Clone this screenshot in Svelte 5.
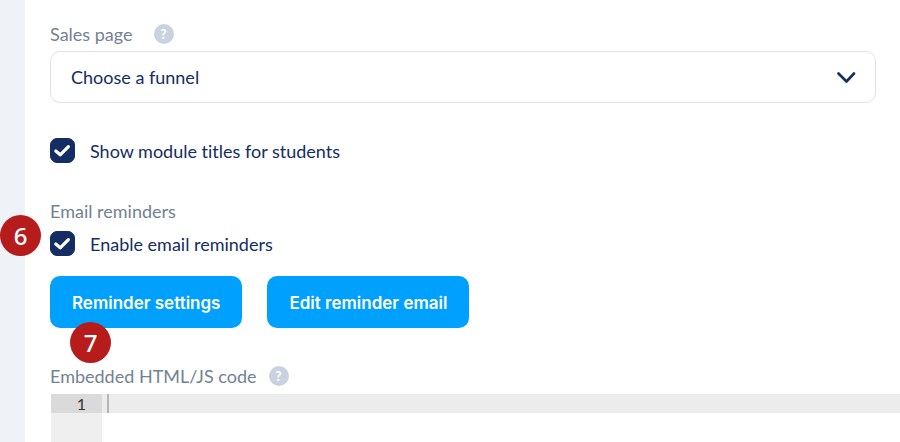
<script lang="ts">
	let funnel = '';
	let showTitles = true;
	let reminders = true;
	let code = '';

	$: lines = code.split('\n');
</script>

{#snippet help(topic: string)}
	<button type="button" class="help" aria-label={`Help: ${topic}`}>?</button>
{/snippet}

{#snippet tick()}
	<svg class="tick" viewBox="0 0 25 25" aria-hidden="true">
		<path d="M5.8 13 10.2 16.8 18.4 8.6" />
	</svg>
{/snippet}

<div class="page">
	<div class="rail"></div>
	<main>
		<section class="field">
			<div class="heading wide">
				<label for="funnel">Sales page</label>
				{@render help('Sales page')}
			</div>
			<div class="select">
				<select id="funnel" bind:value={funnel}>
					<option value="">Choose a funnel</option>
				</select>
				<svg class="chevron" viewBox="0 0 20 12" aria-hidden="true">
					<path d="M2.5 2.5 10.5 10.5 18 2.5" />
				</svg>
			</div>
		</section>

		<label class="check">
			<span class="box">
				<input type="checkbox" bind:checked={showTitles} />
				{@render tick()}
			</span>
			Show module titles for students
		</label>

		<section class="reminders">
			<div class="heading">Email reminders</div>
			<label class="check">
				<span class="box">
					<input type="checkbox" bind:checked={reminders} />
					{@render tick()}
				</span>
				Enable email reminders
				<span class="badge beside">6</span>
			</label>
			<div class="actions">
				<div class="action">
					<button type="button" class="primary">Reminder settings</button>
					<span class="badge below">7</span>
				</div>
				<button type="button" class="primary">Edit reminder email</button>
			</div>
		</section>

		<section class="embed">
			<div class="heading">
				<label for="code">Embedded HTML/JS code</label>
				{@render help('Embedded HTML/JS code')}
			</div>
			<div class="editor">
				<div class="gutter">
					{#each lines as _, i}
						<div class="number">{i + 1}</div>
					{/each}
				</div>
				<div class="code">
					<textarea id="code" rows="2" spellcheck="false" bind:value={code}></textarea>
					<span class="cursor"></span>
				</div>
			</div>
		</section>
	</main>
</div>

<style>
	:global(body) {
		margin: 0;
		background: #fff;
	}
	.page {
		display: flex;
		height: 100vh;
		overflow: hidden;
		font: 18px/24px Lato, 'Liberation Sans', sans-serif;
		font-variant-ligatures: none;
		color: #142d63;
	}
	.rail {
		flex: 0 0 25px;
		background: #eff3f8;
	}
	main {
		flex: 1;
		display: flex;
		flex-direction: column;
		min-width: 0;
		padding: 22px 0 0 25px;
	}
	.field {
		padding-right: 24px;
		margin-bottom: 35px;
	}
	.heading {
		display: flex;
		align-items: center;
		gap: 12px;
		color: #738292;
	}
	.heading.wide {
		gap: 21px;
		margin-bottom: 5px;
	}
	.help {
		width: 20px;
		height: 20px;
		padding: 0;
		border: 0;
		border-radius: 50%;
		background: #c9d3df;
		color: #fff;
		font: 900 13px/20px Lato, sans-serif;
		text-align: center;
	}
	.select {
		position: relative;
	}
	select {
		display: block;
		width: 100%;
		height: 52px;
		padding: 0 50px 0 20px;
		border: 1px solid #e0e2e5;
		border-radius: 10px;
		appearance: none;
		background: #fff;
		color: inherit;
		font: inherit;
	}
	.chevron {
		position: absolute;
		top: 20px;
		right: 20px;
		width: 20px;
		height: 12px;
		pointer-events: none;
	}
	.chevron path,
	.tick path {
		fill: none;
		stroke: #142d63;
		stroke-width: 2.6;
		stroke-linecap: round;
		stroke-linejoin: round;
	}
	.check {
		position: relative;
		display: flex;
		align-items: center;
		align-self: flex-start;
		gap: 15px;
	}
	.box {
		display: grid;
		width: 25px;
		height: 25px;
	}
	.box input {
		grid-area: 1 / 1;
		width: 25px;
		height: 25px;
		margin: 0;
		border: 1px solid #142d63;
		border-radius: 7px;
		appearance: none;
		background: #fff;
	}
	.box input:checked {
		background: #142d63;
	}
	.tick {
		grid-area: 1 / 1;
		width: 25px;
		height: 25px;
		pointer-events: none;
	}
	.tick path {
		stroke: #fff;
		stroke-width: 3.2;
	}
	.reminders {
		margin-top: 36px;
	}
	.reminders .check {
		margin-top: 8px;
	}
	.actions {
		display: flex;
		gap: 25px;
		margin-top: 20px;
	}
	.action {
		position: relative;
	}
	.primary {
		display: block;
		height: 52px;
		padding: 2px 22px 0;
		border: 0;
		border-radius: 10px;
		background: #00a0ff;
		color: #fff;
		font: 600 17px/24px Inter, 'Liberation Sans', sans-serif;
	}
	.badge {
		position: absolute;
		width: 41px;
		height: 41px;
		border-radius: 50%;
		background: #b71c1c;
		color: #fff;
		font: 500 24px/41px 'Noto Sans', sans-serif;
		text-align: center;
	}
	.beside {
		top: -16px;
		left: -50px;
	}
	.below {
		top: 46px;
		left: 20px;
	}
	.embed {
		flex: 1;
		display: flex;
		flex-direction: column;
		margin-top: 36px;
	}
	.editor {
		flex: 1;
		display: flex;
		margin: 6px 0 0 1px;
		font: 16px/20px Lato, sans-serif;
	}
	.gutter {
		flex: 0 0 51px;
		background: #efefef;
		color: #333;
	}
	.number {
		height: 19px;
		padding-right: 16px;
		text-align: right;
	}
	.number:first-child {
		background: #dadada;
	}
	.code {
		position: relative;
		flex: 1;
	}
	textarea {
		display: block;
		width: 100%;
		height: 100%;
		box-sizing: border-box;
		padding: 0 6px;
		border: 0;
		outline: 0;
		resize: none;
		background: linear-gradient(#ececec 19px, #fff 19px);
		font: inherit;
	}
	.cursor {
		position: absolute;
		top: 0;
		left: 5px;
		width: 2px;
		height: 19px;
		background: #b5b5b5;
	}
</style>
